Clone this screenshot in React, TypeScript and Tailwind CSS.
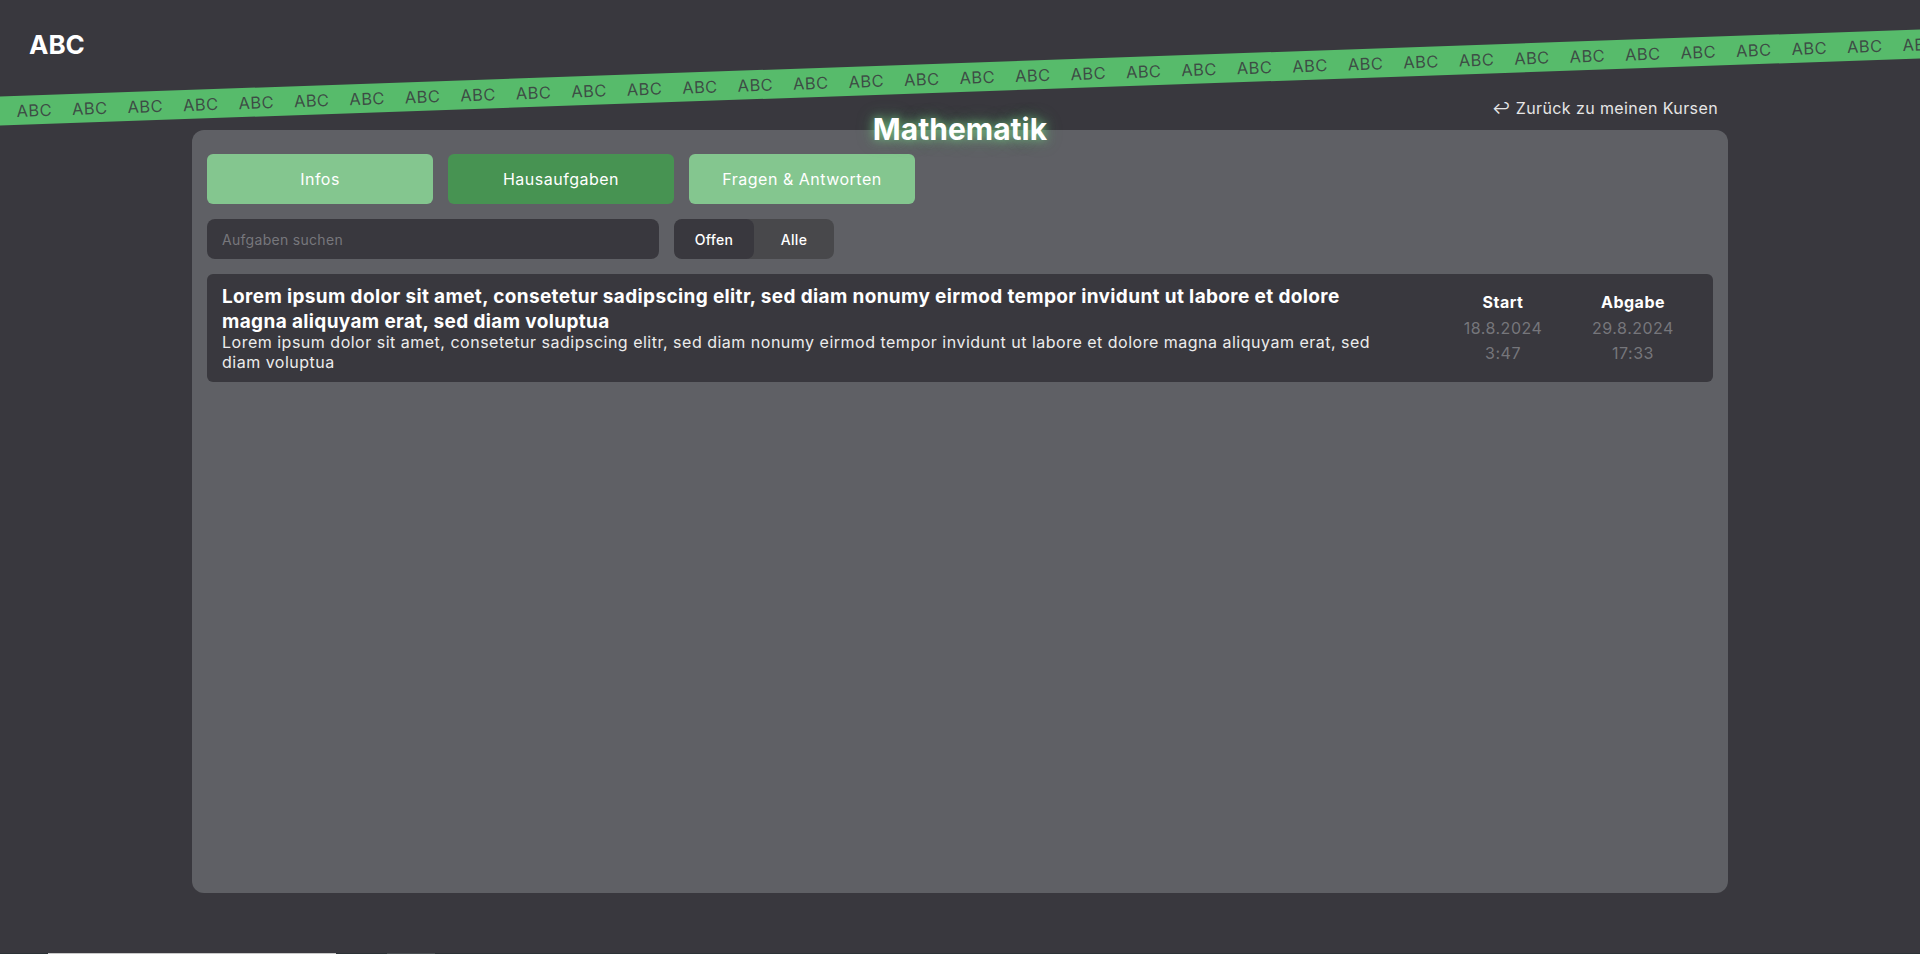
import { useState } from 'react';

const LOREM =
  'Lorem ipsum dolor sit amet, consetetur sadipscing elitr, sed diam nonumy eirmod tempor invidunt ut labore et dolore magna aliquyam erat, sed diam voluptua';

type Task = {
  id: number;
  title: string;
  description: string;
  start: [string, string];
  due: [string, string];
  done: boolean;
};

const TASKS: Task[] = [
  {
    id: 1,
    title: LOREM,
    description: LOREM,
    start: ['18.8.2024', '3:47'],
    due: ['29.8.2024', '17:33'],
    done: false
  }
];

const TABS = ['Infos', 'Hausaufgaben', 'Fragen & Antworten'];

// the diagonal stripe behind the header
function Ribbon() {
  return (
    <div className="absolute left-[-40px] top-[62.5px] w-[2000px] h-[29px] -rotate-2 bg-[#57bb6b] flex items-center pl-[0.5px] pointer-events-none">
      {Array.from({ length: 37 }, (_, i) => (
        <span
          key={i}
          className="w-[55.5px] shrink-0 text-[16.5px] leading-[20px] tracking-[0.4px] text-[#39383e]/85"
        >
          ABC
        </span>
      ))}
    </div>
  );
}

export default function App() {
  const [tab, setTab] = useState('Hausaufgaben');
  const [filter, setFilter] = useState<'open' | 'all'>('open');
  const [query, setQuery] = useState('');

  const visible = TASKS.filter(
    (t) =>
      (filter === 'all' || !t.done) &&
      t.title.toLowerCase().includes(query.toLowerCase())
  );

  return (
    <div className="relative h-screen overflow-hidden bg-[#39383e] text-white font-['Inter',_sans-serif]">
      <Ribbon />

      {/* Header */}
      <div className="relative h-[98px] px-[29px] pt-[29px]">
        <span className="text-[26px] leading-[32px] font-bold">ABC</span>
      </div>

      <div className="relative w-[1536px] mx-auto">
        <div className="flex justify-end pr-[10px] h-[20px]">
          <a href="#" className="text-[16px] leading-[20px] tracking-[0.4px] text-[#e6e6e6] hover:text-white">
            ↩ Zurück zu meinen Kursen
          </a>
        </div>

        {/* Course panel */}
        <div className="relative mt-[12px] h-[763px] rounded-xl bg-[#5f6065] px-[15px] pt-[24px]">
          <h1 className="absolute -top-[19px] left-1/2 -translate-x-1/2 text-[30px] leading-[36px] font-bold text-white [text-shadow:0_0_10px_rgba(120,210,135,0.85),0_0_18px_rgba(87,187,107,0.45)]">
            Mathematik
          </h1>

          <div className="flex gap-[15px]">
            {TABS.map((t) => (
              <button
                key={t}
                onClick={() => setTab(t)}
                className={`w-[226px] h-[50px] rounded-md text-[16px] tracking-[0.5px] text-white ${
                  tab === t ? 'bg-[#479352]' : 'bg-[#84c68f]'
                }`}
              >
                {t}
              </button>
            ))}
          </div>

          <div className="flex gap-[15px] mt-[15px]">
            <input
              value={query}
              onChange={(e) => setQuery(e.target.value)}
              placeholder="Aufgaben suchen"
              className="w-[452px] h-[40px] rounded-lg bg-[#39383e] px-[15px] text-[14px] tracking-[0.3px] text-white placeholder:text-[#77777c] outline-none"
            />
            <div className="flex w-[160px] h-[40px] rounded-lg bg-[#48484b] overflow-hidden text-[14px] font-medium tracking-[0.3px]">
              <button
                onClick={() => setFilter('open')}
                className={`w-[80px] rounded-lg ${filter === 'open' ? 'bg-[#39383e]' : ''}`}
              >
                Offen
              </button>
              <button
                onClick={() => setFilter('all')}
                className={`w-[80px] rounded-lg ${filter === 'all' ? 'bg-[#39383e]' : ''}`}
              >
                Alle
              </button>
            </div>
          </div>

          <div className="flex flex-col gap-[15px] mt-[15px]">
            {visible.map((task) => (
              <div
                key={task.id}
                className="flex items-center rounded-md bg-[#39383e] px-[15px] pt-[11px] pb-[10px]"
              >
                <div className="flex-1 min-w-0 mr-[35px]">
                  <p className="text-[19px] leading-[24.5px] tracking-[0.36px] font-bold text-white">
                    {task.title}
                  </p>
                  <p className="-mt-px text-[16px] leading-[19.5px] tracking-[0.5px] text-[#ececec]">
                    {task.description}
                  </p>
                </div>
                <div className="w-[130px] shrink-0 text-center text-[16px] leading-[25.5px] tracking-[0.5px]">
                  <p className="font-bold text-white">Start</p>
                  <p className="text-[#76767b]">{task.start[0]}</p>
                  <p className="text-[#76767b]">{task.start[1]}</p>
                </div>
                <div className="w-[130px] shrink-0 text-center text-[16px] leading-[25.5px] tracking-[0.5px]">
                  <p className="font-bold text-white">Abgabe</p>
                  <p className="text-[#76767b]">{task.due[0]}</p>
                  <p className="text-[#76767b]">{task.due[1]}</p>
                </div>
              </div>
            ))}
          </div>
        </div>
      </div>

      {/* Footer, starts at the fold */}
      <footer className="mt-[60px] h-[40px] bg-[#2c3236] flex items-start pl-[48px]">
        <div className="w-[288px] h-[30px] bg-[#c8c8c8]" />
        <div className="ml-[51px] w-[48px] h-[30px] bg-[#4b5053]" />
      </footer>
    </div>
  );
}
